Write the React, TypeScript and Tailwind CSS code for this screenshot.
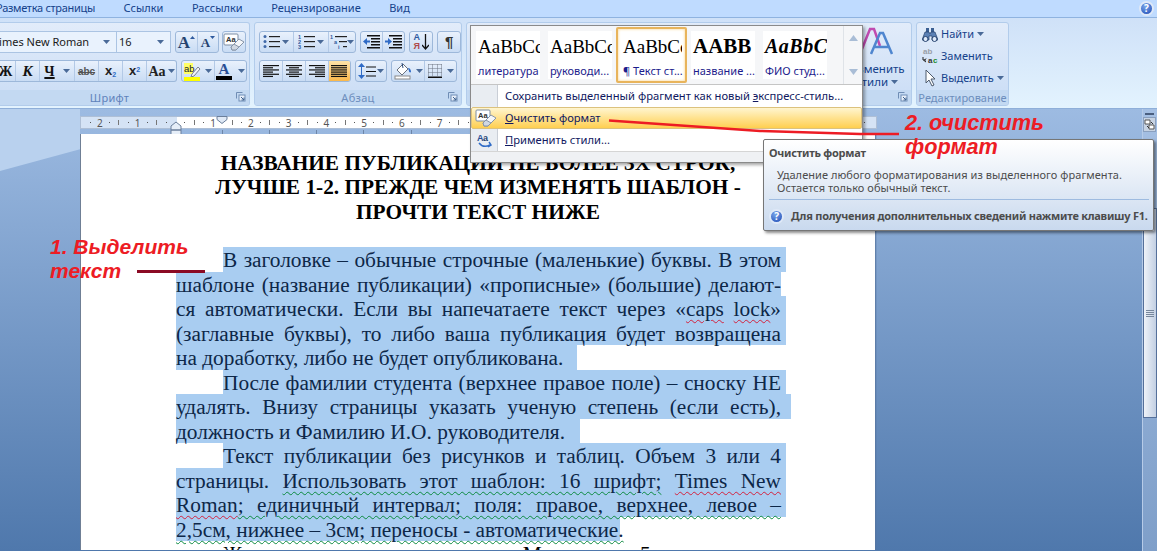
import type { ReactNode } from "react";

const ui = "font-['Noto_Sans',sans-serif]";
const serif = "font-['Liberation_Serif',serif]";

function Arrow({ className = "" }: { className?: string }) {
  return (
    <svg width="7" height="4" viewBox="0 0 7 4" className={"shrink-0 " + className}>
      <path d="M0 0h7L3.5 4z" fill="#4a6a98" />
    </svg>
  );
}

function Seg({ w, active, children }: { w: string; active?: boolean; children: ReactNode }) {
  return (
    <div
      className={
        "flex h-full items-center justify-center gap-[2px] border-r border-[#b3c9e6] last:border-r-0 " +
        w +
        (active ? " bg-gradient-to-b from-[#fde2a8] to-[#fbb84a]" : "")
      }
    >
      {children}
    </div>
  );
}

function Group({ className = "", children }: { className?: string; children: ReactNode }) {
  return (
    <div
      className={
        "flex h-[22px] overflow-hidden rounded-[3px] border border-[#9db8da] bg-gradient-to-b from-[#e9f1fc] to-[#c9dcf4] " +
        className
      }
    >
      {children}
    </div>
  );
}

function Launcher() {
  return (
    <svg width="10" height="10" viewBox="0 0 10 10">
      <path d="M.5.5h6M.5.5v6" stroke="#6f8db5" fill="none" />
      <rect x="3" y="3" width="6" height="6" fill="#e8f0fa" stroke="#6f8db5" />
      <path d="M5 5l3 3M8 5.5V8H5.5" stroke="#3f628f" fill="none" />
    </svg>
  );
}

function Help({ size = 14 }: { size?: number }) {
  return (
    <div
      className={
        "flex shrink-0 items-center justify-center rounded-full border-2 border-[#dfe9f7] bg-[radial-gradient(circle_at_40%_30%,#7aa6ea,#1c48b4)] font-bold text-white " +
        ui
      }
      style={{ width: size, height: size, fontSize: size - 5 }}
    >
      ?
    </div>
  );
}

function Eraser() {
  return (
    <svg width="22" height="18" viewBox="0 0 22 18">
      <rect x="1" y="1" width="14" height="11" rx="1" fill="#fff" stroke="#7d8da3" />
      <text x="3" y="9" fontSize="7.5" fontWeight="700" fill="#333" fontFamily="Liberation Sans">Aa</text>
      <path d="M8 14l8-8 5 3-8 8H9z" fill="#f4f6f9" stroke="#8795a8" />
      <path d="M8 14l3-3 5 3-3 3H9z" fill="#d1d8e2" stroke="#8795a8" />
    </svg>
  );
}

function Highlighter() {
  return (
    <svg width="17" height="19" viewBox="0 0 17 19">
      <rect x="0" y="1" width="9" height="11" fill="#ffff66" />
      <text x="0" y="9.500" fontSize="9.500" fill="#222" fontFamily="Liberation Sans">ab</text>
      <path d="M8 12l6-7 2 2-6 7-3 1z" fill="#f2f4f8" stroke="#78818f" />
      <rect x="0" y="15" width="16" height="4" fill="#ffff00" />
    </svg>
  );
}

function Lines({ rows }: { rows: number[][] }) {
  return (
    <svg width="17" height="13" viewBox="0 0 17 13">
      {rows.map(([a, b], i) => (
        <rect key={i} x={a} y={i * (13 / rows.length)} width={b} height="1.2" fill="#111" />
      ))}
    </svg>
  );
}

const alignLeft = [[0, 16], [0, 10], [0, 16], [0, 10], [0, 16], [0, 10]];
const alignCenter = [[0, 16], [3, 10], [0, 16], [3, 10], [0, 16], [3, 10]];
const alignRight = [[0, 16], [6, 10], [0, 16], [6, 10], [0, 16], [6, 10]];
const alignWide = [[0, 16], [0, 16], [0, 16], [0, 16], [0, 16], [0, 16]];

function ListIcon({ kind }: { kind: "bullet" | "number" | "multi" }) {
  const rows = [1, 6, 11];
  return (
    <svg width="17" height="14" viewBox="0 0 17 14">
      {rows.map((y, i) => (
        <g key={y}>
          {kind === "bullet" && <circle cx="2" cy={y + 0.5} r="1.5" fill="#3f68a8" />}
          {kind === "number" && (
            <text x="0" y={y + 3} fontSize="5.5" fontWeight="700" fill="#2f5a9e" fontFamily="Liberation Sans">
              {i + 1}
            </text>
          )}
          {kind === "multi" && (
            <text x={i * 4} y={y + 3} fontSize="5.5" fontWeight="700" fill="#2f5a9e" fontFamily="Liberation Sans">
              {["1", "a", "i"][i]}
            </text>
          )}
          <rect x={kind === "multi" ? 5 + i * 4 : 6} y={y} width={kind === "multi" ? 12 - i * 4 : 11} height="1.2" fill="#222" />
        </g>
      ))}
    </svg>
  );
}

function Indent({ flip }: { flip?: boolean }) {
  return (
    <svg width="17" height="14" viewBox="0 0 17 14">
      {[0, 3, 6, 9, 12].map((y) => (
        <rect key={y} x={y === 0 || y === 12 ? 4 : 8} y={y} width={y === 0 || y === 12 ? 13 : 9} height="1.5" fill="#111" />
      ))}
      {flip ? (
        <path d="M0 5.5h3V3l4 3.5L3 10V7.5H0z" fill="#2f6bc6" />
      ) : (
        <path d="M7 5.5H4V3L0 6.5 4 10V7.5h3z" fill="#2f6bc6" />
      )}
    </svg>
  );
}

function Bucket() {
  return (
    <svg width="20" height="18" viewBox="0 0 20 18">
      <path d="M3 8l6-6 5 5-6 6z" fill="#fff" stroke="#68707c" />
      <path d="M8 1l1 5" stroke="#2b4d80" />
      <path d="M14 6c2 0 3 2 3 4-1 1-2 0-2-1z" fill="#2f6bc6" />
      <rect x="1" y="14" width="15" height="3" fill="#fff" stroke="#8a8a8a" />
    </svg>
  );
}

function Borders() {
  return (
    <svg width="14" height="14" viewBox="0 0 14 14">
      <path d="M.5.5h13M.5 4.5h13M.5 8.5h13M.5.5v12M4.500.5v12M9.500.5v12M13.500.5v12" stroke="#6b7280" strokeDasharray="1 1" fill="none" />
      <rect x="0" y="12.500" width="14" height="1.500" fill="#111" />
    </svg>
  );
}

function Binoculars() {
  return (
    <svg width="16" height="15" viewBox="0 0 16 15">
      <path d="M4 1h3v5H4zM9 1h3v5H9z" fill="#3b5f92" />
      <path d="M3 5h4l1 2 1-2h4l3 8h-6V9H7v4H0z" fill="#5c81b5" stroke="#26436f" strokeWidth=".7" />
      <circle cx="3.500" cy="12" r="2.500" fill="#dfeafa" stroke="#26436f" />
      <circle cx="12.500" cy="12" r="2.500" fill="#dfeafa" stroke="#26436f" />
    </svg>
  );
}

function Replace() {
  return (
    <svg width="18" height="18" viewBox="0 0 18 18">
      <text x="1" y="7" fontSize="8" fontWeight="700" fill="#9aa0a8" fontFamily="Liberation Sans">ab</text>
      <text x="6" y="16" fontSize="8" fontWeight="700" fill="#333" fontFamily="Liberation Sans">a</text>
      <text x="11" y="16" fontSize="8" fontWeight="700" fill="#1a8a2a" fontFamily="Liberation Sans">c</text>
      <path d="M1 10v3h3M4 11.500L2 13.500l2 1.500" stroke="#222" fill="none" />
    </svg>
  );
}

function Cursor() {
  return (
    <svg width="14" height="18" viewBox="0 0 14 18">
      <path d="M2 1v13l3-3 3 6 2-1-3-6h4z" fill="#fff" stroke="#4d5a6c" />
    </svg>
  );
}

function FontGroup() {
  return (
    <div className="flex h-[84px] w-[250px] shrink-0 flex-col overflow-hidden rounded-r-[3px] border border-l-0 border-[#b2cceb] bg-gradient-to-b from-[#e2ecfa] to-[#c9dcf5]">
      <div className="flex flex-1 flex-col gap-[7px] pt-[8px]">
        <div className="flex h-[22px] items-center">
          <div className="flex h-[22px] w-[117px] items-center justify-between border border-l-0 border-[#abc4e3] bg-[#e9f2fd] pr-[6px] text-[11px] text-[#1a1a1a]">
            <span className="-ml-[7px] whitespace-nowrap">Times New Roman</span>
            <Arrow />
          </div>
          <div className="flex h-[22px] w-[54px] items-center justify-between border border-l-0 border-[#abc4e3] bg-[#e9f2fd] pl-[2px] pr-[6px] text-[11px] text-[#1a1a1a]">
            <span>16</span>
            <Arrow />
          </div>
          <Group className="ml-[4px] w-[44px]">
            <Seg w="w-[23px]">
              <span className={serif + " text-[17px] font-bold leading-none text-[#26436f]"}>A</span>
              <svg width="5" height="3" className="-mt-[10px] -ml-[2px]"><path d="M0 3l2.500-3L5 3z" fill="#2f5a9e" /></svg>
            </Seg>
            <Seg w="w-[21px]">
              <span className={serif + " text-[13px] font-bold leading-none text-[#26436f]"}>A</span>
              <svg width="5" height="3" className="-mt-[10px] -ml-[2px]"><path d="M0 0l2.500 3L5 0z" fill="#2f5a9e" /></svg>
            </Seg>
          </Group>
          <Group className="ml-[3px] w-[24px]">
            <Seg w="w-[22px]"><Eraser /></Seg>
          </Group>
        </div>
        <div className="flex h-[22px] items-center">
          <Group className="w-[177px] rounded-l-none border-l-0">
            <Seg w="w-[16px]">
              <span className={serif + " -ml-[4px] text-[14px] font-bold text-[#111]"}>Ж</span>
            </Seg>
            <Seg w="w-[24px]">
              <span className={serif + " text-[15px] font-bold italic text-[#111]"}>К</span>
            </Seg>
            <Seg w="w-[35px]">
              <span className={serif + " text-[14px] font-bold text-[#111] underline decoration-2"}>Ч</span>
              <Arrow className="ml-[6px]" />
            </Seg>
            <Seg w="w-[24px]">
              <span className={"font-['Liberation_Sans',sans-serif] text-[10px] font-bold text-[#555] line-through"}>abc</span>
            </Seg>
            <Seg w="w-[24px]">
              <span className="font-['Liberation_Sans',sans-serif] text-[13px] font-bold text-[#222]">x<sub className="text-[7px] text-[#2f6bc6]">2</sub></span>
            </Seg>
            <Seg w="w-[24px]">
              <span className="font-['Liberation_Sans',sans-serif] text-[13px] font-bold text-[#222]">x<sup className="text-[7px] text-[#2f6bc6]">2</sup></span>
            </Seg>
            <Seg w="w-[29px]">
              <span className={serif + " text-[14px] font-bold text-[#222]"}>Aa</span>
              <Arrow />
            </Seg>
          </Group>
          <Group className="ml-[4px] w-[66px]">
            <Seg w="w-[33px]">
              <Highlighter />
              <Arrow className="ml-[2px]" />
            </Seg>
            <Seg w="w-[31px]">
              <div className="flex w-[16px] flex-col items-center">
                <span className={serif + " text-[15px] font-bold leading-[14px] text-[#2a4f95]"}>A</span>
                <span className="h-[4px] w-full bg-black" />
              </div>
              <Arrow className="ml-[4px]" />
            </Seg>
          </Group>
        </div>
      </div>
      <div className="relative flex h-[15px] items-center justify-center bg-[#c3d9f2] pt-[1px] text-[11px] text-[#5f82bb]">
        <span className="-ml-[30px] tracking-[.3px]">Шрифт</span>
        <div className="absolute right-[3px] top-[2px]"><Launcher /></div>
      </div>
    </div>
  );
}

function ParagraphGroup() {
  return (
    <div className="flex h-[84px] w-[208px] shrink-0 flex-col overflow-hidden rounded-[3px] border border-[#b2cceb] bg-gradient-to-b from-[#e2ecfa] to-[#c9dcf5]">
      <div className="flex flex-1 flex-col gap-[7px] pl-[4px] pt-[8px]">
        <div className="flex gap-[4px]">
          <Group className="w-[98px]">
            <Seg w="w-[34px]"><ListIcon kind="bullet" /><Arrow /></Seg>
            <Seg w="w-[35px]"><ListIcon kind="number" /><Arrow /></Seg>
            <Seg w="w-[27px]"><ListIcon kind="multi" /><Arrow className="-ml-[2px]" /></Seg>
          </Group>
          <Group className="w-[45px]">
            <Seg w="w-[22px]"><Indent /></Seg>
            <Seg w="w-[21px]"><Indent flip /></Seg>
          </Group>
          <Group className="w-[24px]">
            <div className="flex w-full items-center justify-center gap-[2px]">
              <span className="flex flex-col text-center font-['Liberation_Sans',sans-serif] text-[9px] font-bold leading-[9px]">
                <span className="text-[#2f5a9e]">A</span>
                <span className="text-[#b04a4a]">Я</span>
              </span>
              <svg width="7" height="16" viewBox="0 0 7 16"><path d="M3.500 0v15M0 11l3.500 4 3.500-4" stroke="#111" fill="none" strokeWidth="1.300" /></svg>
            </div>
          </Group>
          <Group className="w-[24px]">
            <span className="w-full text-center font-['Liberation_Sans',sans-serif] text-[15px] font-bold leading-[20px] text-[#333]">¶</span>
          </Group>
        </div>
        <div className="flex gap-[4px]">
          <Group className="w-[92px]">
            <Seg w="w-[23px]"><Lines rows={alignLeft} /></Seg>
            <Seg w="w-[23px]"><Lines rows={alignCenter} /></Seg>
            <Seg w="w-[23px]"><Lines rows={alignRight} /></Seg>
            <Seg w="w-[21px]" active><Lines rows={alignWide} /></Seg>
          </Group>
          <Group className="w-[32px]">
            <div className="flex w-full items-center justify-center gap-[1px]">
              <svg width="7" height="16" viewBox="0 0 7 16"><path d="M3.500 0L7 4H0zM3.500 16L0 12h7zM3 4h1v8H3z" fill="#2f6bc6" /></svg>
              <svg width="10" height="11" viewBox="0 0 10 11"><path d="M0 1h10M0 5.500h10M0 10h10" stroke="#111" /></svg>
              <Arrow />
            </div>
          </Group>
          <Group className="w-[66px]">
            <Seg w="w-[33px]"><Bucket /><Arrow /></Seg>
            <Seg w="w-[31px]"><Borders /><Arrow className="ml-[3px]" /></Seg>
          </Group>
        </div>
      </div>
      <div className="relative flex h-[15px] items-center justify-center bg-[#c3d9f2] pt-[1px] text-[11px] text-[#6d8ebd]">
        <span className="tracking-[.3px]">Абзац</span>
        <div className="absolute right-[3px] top-[2px]"><Launcher /></div>
      </div>
    </div>
  );
}

function StylesGroup() {
  return (
    <div className="flex h-[84px] w-[446px] shrink-0 flex-col overflow-hidden rounded-[3px] border border-[#b2cceb] bg-gradient-to-b from-[#e2ecfa] to-[#c9dcf5]">
      <div className="flex flex-1 justify-end pr-[4px]">
        <div className="flex w-[60px] flex-col items-center pt-[4px] text-[11.5px] leading-[13px] text-[#15428b]">
          <svg width="34" height="30" viewBox="0 0 34 30">
            <path d="M2 22L10 2h4l6 17" stroke="#c04bb0" strokeWidth="2.500" fill="none" />
            <path d="M11 27L20 6h3l9 21M15 20h13" stroke="#4f86cf" strokeWidth="2.500" fill="none" />
          </svg>
          <span className="mt-[5px]">Изменить</span>
          <span className="flex items-center gap-[3px]">стили <Arrow /></span>
        </div>
      </div>
      <div className="relative flex h-[15px] items-center justify-center bg-[#c3d9f2]">
        <div className="absolute right-[3px] top-[2px]"><Launcher /></div>
      </div>
    </div>
  );
}

function EditingGroup() {
  return (
    <div className="flex h-[84px] w-[93px] shrink-0 flex-col overflow-hidden rounded-[3px] border border-[#b2cceb] bg-gradient-to-b from-[#e2ecfa] to-[#c9dcf5]">
      <div className="flex flex-1 flex-col gap-[4px] pl-[5px] pt-[2px] text-[11px] leading-[18px] text-[#15428b]">
        <div className="flex h-[18px] items-center gap-[3px]"><Binoculars />Найти <Arrow /></div>
        <div className="flex h-[18px] items-center gap-[1px]"><Replace />Заменить</div>
        <div className="flex h-[18px] items-center gap-[3px] pl-[2px]"><Cursor />Выделить <Arrow /></div>
      </div>
      <div className="flex h-[15px] items-center justify-center bg-[#c3d9f2] pt-[1px] text-[11px] text-[#6d8ebd]">Редактирование</div>
    </div>
  );
}

function Ruler() {
  const cells: ReactNode[] = [];
  for (let i = -9; i < 74; i++) {
    const k = i % 4 === 0 ? Math.abs(i / 4) : null;
    const mod = ((i % 4) + 4) % 4;
    cells.push(
      <div key={i} className="flex w-[9.45px] shrink-0 items-center justify-center">
        {mod === 0 ? (
          k ? <span>{k}</span> : null
        ) : mod === 2 ? (
          <span className="h-[5px] w-px bg-[#777]" />
        ) : (
          <span className="h-px w-px bg-[#555]" />
        )}
      </div>
    );
  }
  return (
    <div className="relative h-[25px] w-[797px] shrink-0 pt-[7px]">
      <div
        className={
          "flex h-[13px] items-center overflow-hidden border border-[#aebfd6] bg-[linear-gradient(to_right,#d5e3f5_96px,#fff_96px,#fff_706px,#d5e3f5_706px)] pl-[4.800px] text-[10px] leading-none text-[#555] " +
          ui
        }
      >
        {cells}
      </div>
      <svg width="797" height="25" viewBox="0 0 797 25" className="absolute left-0 top-0">
        {[142, 189, 236, 283, 331].map((x) => (
          <rect key={x} x={x} y="21" width="1" height="4" fill="#6d86a8" />
        ))}
        <path d="M137 7.500h10v3l-5 4-5-4z" fill="#dfe9f6" stroke="#6b7f9b" />
        <path d="M91 21v-4l5-4 5 4v4zM91 21h10v5H91z" fill="#e6eef8" stroke="#6b7f9b" />
      </svg>
    </div>
  );
}

type PageLine = { box: string; text: string; body: ReactNode };

const red = "underline decoration-wavy decoration-[#d4213d] decoration-1 underline-offset-[3px]";
const green = "underline decoration-wavy decoration-[#0b8a3f] decoration-1 underline-offset-[3px]";

const pageLines: PageLine[] = [
  { box: "ml-[142px] w-[563px]", text: "w-[558px] [text-align-last:justify]", body: "В заголовке – обычные строчные (маленькие) буквы. В этом" },
  { box: "ml-[95px] w-[605px]", text: "w-[605px] [text-align-last:justify]", body: "шаблоне (название публикации) «прописные» (большие) делают-" },
  { box: "ml-[95px] w-[610px]", text: "w-[605px] [text-align-last:justify]", body: <>ся автоматически. Если вы напечатаете текст через «<span className={red}>caps</span> <span className={red}>lock</span>»</> },
  { box: "ml-[95px] w-[610px]", text: "w-[605px] [text-align-last:justify]", body: "(заглавные буквы), то либо ваша публикация будет возвращена" },
  { box: "ml-[95px] w-[401px]", text: "", body: "на доработку, либо не будет опубликована." },
  { box: "ml-[142px] w-[563px]", text: "w-[558px] [text-align-last:justify]", body: "После фамилии студента (верхнее правое поле) – сноску НЕ" },
  { box: "ml-[95px] w-[615px]", text: "w-[605px] [text-align-last:justify]", body: "удалять. Внизу страницы указать ученую степень (если есть)," },
  { box: "ml-[95px] w-[404px]", text: "", body: "должность и Фамилию И.О. руководителя." },
  { box: "ml-[142px] w-[563px]", text: "w-[558px] [text-align-last:justify]", body: "Текст публикации без рисунков и таблиц. Объем 3 или 4" },
  { box: "ml-[95px] w-[610px]", text: "w-[605px] [text-align-last:justify]", body: <>страницы. <span className={green}>Использовать этот шаблон: 16 шрифт;</span> <span className={red}>Times New</span></> },
  { box: "ml-[95px] w-[610px]", text: "w-[605px] [text-align-last:justify]", body: <><span className={red}>Roman</span><span className={green}>; единичный интервал; поля: правое, верхнее, левое –</span></> },
  { box: "ml-[95px] w-[444px]", text: "", body: <span className={green}>2,5см, нижнее – 3см; переносы - автоматические.</span> },
];

function Page() {
  return (
    <div className={"h-[416px] w-[795px] shrink-0 overflow-hidden border-l border-[#6f7f95] bg-white pt-[17px] text-[21.33px] " + serif}>
      <div className="text-center font-bold leading-[24.4px] text-black">
        <div>НАЗВАНИЕ ПУБЛИКАЦИИ НЕ БОЛЕЕ 3Х СТРОК,</div>
        <div>ЛУЧШЕ 1-2. ПРЕЖДЕ ЧЕМ ИЗМЕНЯТЬ ШАБЛОН -</div>
        <div>ПРОЧТИ ТЕКСТ НИЖЕ</div>
      </div>
      <div className="mt-[23px]">
        {pageLines.map((l, i) => (
          <div key={i} className={"h-[24.5px] whitespace-nowrap bg-[#a9cdf1] leading-[26px] text-[#0d2748] " + l.box}>
            <div className={l.text}>{l.body}</div>
          </div>
        ))}
        <div className="ml-[142px] w-[558px] leading-[26px] text-black [text-align-last:justify]">
          Желаем успехов авторам. Минимум 5 источников
        </div>
      </div>
    </div>
  );
}

function StyleTile({ sample, label, className, active }: { sample: string; label: string; className: string; active?: boolean }) {
  return (
    <div
      className={
        "flex h-[48px] flex-col overflow-hidden bg-white " +
        (active ? "m-[-4px] mx-0 h-[56px] w-[71px] rounded-[2px] border-2 border-[#e8b45c] px-[3px] py-[2px] shadow-[inset_0_0_3px_#f8d080]" : "w-[64px]")
      }
    >
      <div className={"h-[30px] overflow-hidden whitespace-nowrap pl-[2px] text-[19px] leading-[31px] text-black " + serif + " " + className}>{sample}</div>
      <div className="mt-[3px] whitespace-nowrap pl-[2px] text-[11px] leading-[14px] text-[#1c1c8c]">{label}</div>
    </div>
  );
}

function StylesMenu() {
  return (
    <div className="absolute left-[470px] top-[25px] flex w-[393px] flex-col border border-[#8a8a8a] bg-white shadow-[2px_2px_3px_rgba(0,0,0,.35)]">
      <div className="flex h-[59px] items-center border-b border-[#c5c5c5] bg-[#f5f6f8] pl-[5px]">
        <div className="flex flex-1 items-center gap-[8px]">
          <StyleTile sample="AaBbCcDd" label="литература" className="" />
          <StyleTile sample="AaBbCcDd" label="руководи..." className="" />
          <div className="-mx-[4px]"><StyleTile sample="AaBbCcDd" label="¶ Текст ст..." className="" active /></div>
          <StyleTile sample="AABB" label="название ..." className="text-[21px] font-bold" />
          <StyleTile sample="AaBbCcDd" label="ФИО студ..." className="text-[20px] font-bold italic tracking-[.5px]" />
        </div>
        <div className="flex h-full w-[19px] flex-col items-center justify-center gap-[28px] border-l border-[#dfe3e8]">
          <svg width="9" height="6"><path d="M0 6l4.500-6L9 6z" fill="#a9bdd6" /></svg>
          <svg width="9" height="6"><path d="M0 0l4.500 6L9 0z" fill="#a9bdd6" /></svg>
        </div>
      </div>
      <div className="flex h-[22px] items-center text-[11.2px] text-[#101860]">
        <div className="h-full w-[27px] border-r border-[#c9ced6] bg-[#e9edf2]" />
        <div className="pl-[7px]">Сохранить выделенный фрагмент как новый <u>э</u>кспресс-стиль...</div>
      </div>
      <div className="flex h-[22px] items-center rounded-[2px] border border-[#dcc27d] bg-gradient-to-b from-[#fff5cf] via-[#ffe28e] to-[#ffcf4e] text-[11.2px] text-[#101860]">
        <div className="flex w-[27px] justify-center"><Eraser /></div>
        <div className="pl-[6px]"><u>О</u>чистить формат</div>
      </div>
      <div className="flex h-[22px] items-center text-[11.2px] text-[#101860]">
        <div className="flex h-full w-[27px] items-center justify-center border-r border-[#c9ced6] bg-[#e9edf2]">
          <svg width="17" height="17" viewBox="0 0 17 17">
            <text x="1" y="9" fontSize="9" fontWeight="700" fill="#2a4f95" fontFamily="Liberation Sans">A</text>
            <text x="7" y="9" fontSize="9" fontWeight="700" fill="#26436f" fontFamily="Liberation Sans">a</text>
            <path d="M3 11c3 4 7 4 11 2M13 10l2 3-3 2" stroke="#2f6bc6" strokeWidth="1.500" fill="none" />
          </svg>
        </div>
        <div className="pl-[7px]"><u>П</u>рименить стили...</div>
      </div>
      <div className="h-[11px] border-t border-[#d5d5d5] bg-[#eff1f4]" />
    </div>
  );
}

function Tooltip() {
  return (
    <div className="absolute left-[763px] top-[139px] flex h-[92px] w-[391px] flex-col rounded-[2px] border border-[#767676] bg-gradient-to-b from-white to-[#c9d9ee] pl-[5px] pr-[4px] text-[11px] text-[#4c4c4c] shadow-[2px_2px_3px_rgba(0,0,0,.45)]">
      <div className="pt-[5px] font-bold leading-[15px] tracking-[-.25px]">Очистить формат</div>
      <div className="mt-[8px] pl-[8px] leading-[13px] tracking-[.05px]">
        <div>Удаление любого форматирования из выделенного фрагмента.</div>
        <div>Остается только обычный текст.</div>
      </div>
      <div className="mt-[5px] h-px bg-[#9ebbe0]" />
      <div className="mt-[8px] flex items-center gap-[7px] whitespace-nowrap font-bold tracking-[-.25px]">
        <Help size={15} />
        <span>Для получения дополнительных сведений нажмите клавишу F1.</span>
      </div>
    </div>
  );
}

function Annotations() {
  const note = "absolute font-['Liberation_Sans',sans-serif] font-bold italic leading-[24px] text-[#ed1c24]";
  return (
    <>
      <div className={note + " left-[50px] top-[235px] text-[21px]"}>1. Выделить</div>
      <div className={note + " left-[50px] top-[259px] text-[21px]"}>текст</div>
      <div className="absolute left-[137px] top-[270px] h-[3px] w-[68px] bg-[#8b0a24]" />
      <svg width="300" height="20" viewBox="0 0 300 20" className="absolute left-[605px] top-[118px]">
        <path d="M4 2.500L155 13l100 3h39" stroke="#ed1c24" strokeWidth="2.500" fill="none" />
      </svg>
      <div className={note + " left-[905px] top-[111px] text-[21.7px]"}>2. очистить</div>
      <div className={note + " left-[905px] top-[135px] text-[21.7px]"}>формат</div>
    </>
  );
}

export default function App() {
  return (
    <div className={"relative h-[551px] w-[1157px] overflow-hidden bg-[#7f9fcb] " + ui}>
      <div className="flex h-[18px] items-center gap-[28.500px] border-b border-[#8fb3e0] bg-[#bfdbff] text-[11px] text-[#15428b]">
        <div className="flex w-[95px] justify-end overflow-hidden whitespace-nowrap tracking-[-.3px]">Разметка страницы</div>
        <span>Ссылки</span>
        <span>Рассылки</span>
        <span>Рецензирование</span>
        <span>Вид</span>
        <div className="ml-auto mr-[3px]"><Help size={15} /></div>
      </div>
      <div className="flex h-[91px] gap-[4px] border-b border-[#8fafd9] bg-gradient-to-b from-[#cfe1f8] to-[#e3f3fe] pt-[4px]">
        <FontGroup />
        <ParagraphGroup />
        <StylesGroup />
        <EditingGroup />
      </div>
      <div className="flex h-[442px] bg-gradient-to-b from-[#9dbbe2] to-[#4f78ac]">
        <div className="relative w-[80px] shrink-0 overflow-hidden">
          <div className="absolute left-0 top-0 h-[62px] w-full bg-[#b9d1ee] [clip-path:polygon(0_0,100%_0,100%_65%,0_100%)]" />
        </div>
        <div className="flex w-[797px] shrink-0 flex-col">
          <Ruler />
          <div className="flex">
            <Page />
            <div className="w-[5px] bg-gradient-to-r from-[#55749f] to-transparent" />
          </div>
        </div>
        <div className="flex-1" />
        <div className="flex w-[15px] shrink-0 flex-col border-l border-[#b6cbe8] bg-gradient-to-b from-[#a5c0e4] to-[#7f9fc9]">
          <div className="mx-[2px] mt-[4px] h-[2px] w-[9px] bg-[#4a5f80]" />
          <div className="mt-[2px] flex h-[15px] w-[13px] items-center justify-center border border-[#8aa0bf] bg-[#c7d3e3]">
            <svg width="11" height="11" viewBox="0 0 11 11">
              <path d="M1 1h5v4H1zM5 6h5v4H5z" fill="#fff" stroke="#555" />
              <path d="M7 3l2 2M3 7l2 2" stroke="#333" />
            </svg>
          </div>
          <div className="mt-[76px] flex h-[210px] w-[14px] items-center justify-center border border-[#55709a] bg-gradient-to-r from-[#eef2f8] to-[#c3d0e3]">
            <div className="flex flex-col gap-[1px]">
              <span className="h-px w-[8px] bg-[#77879c]" />
              <span className="h-px w-[8px] bg-[#77879c]" />
              <span className="h-px w-[8px] bg-[#77879c]" />
              <span className="h-px w-[8px] bg-[#77879c]" />
            </div>
          </div>
        </div>
      </div>
      <StylesMenu />
      <Tooltip />
      <Annotations />
    </div>
  );
}
